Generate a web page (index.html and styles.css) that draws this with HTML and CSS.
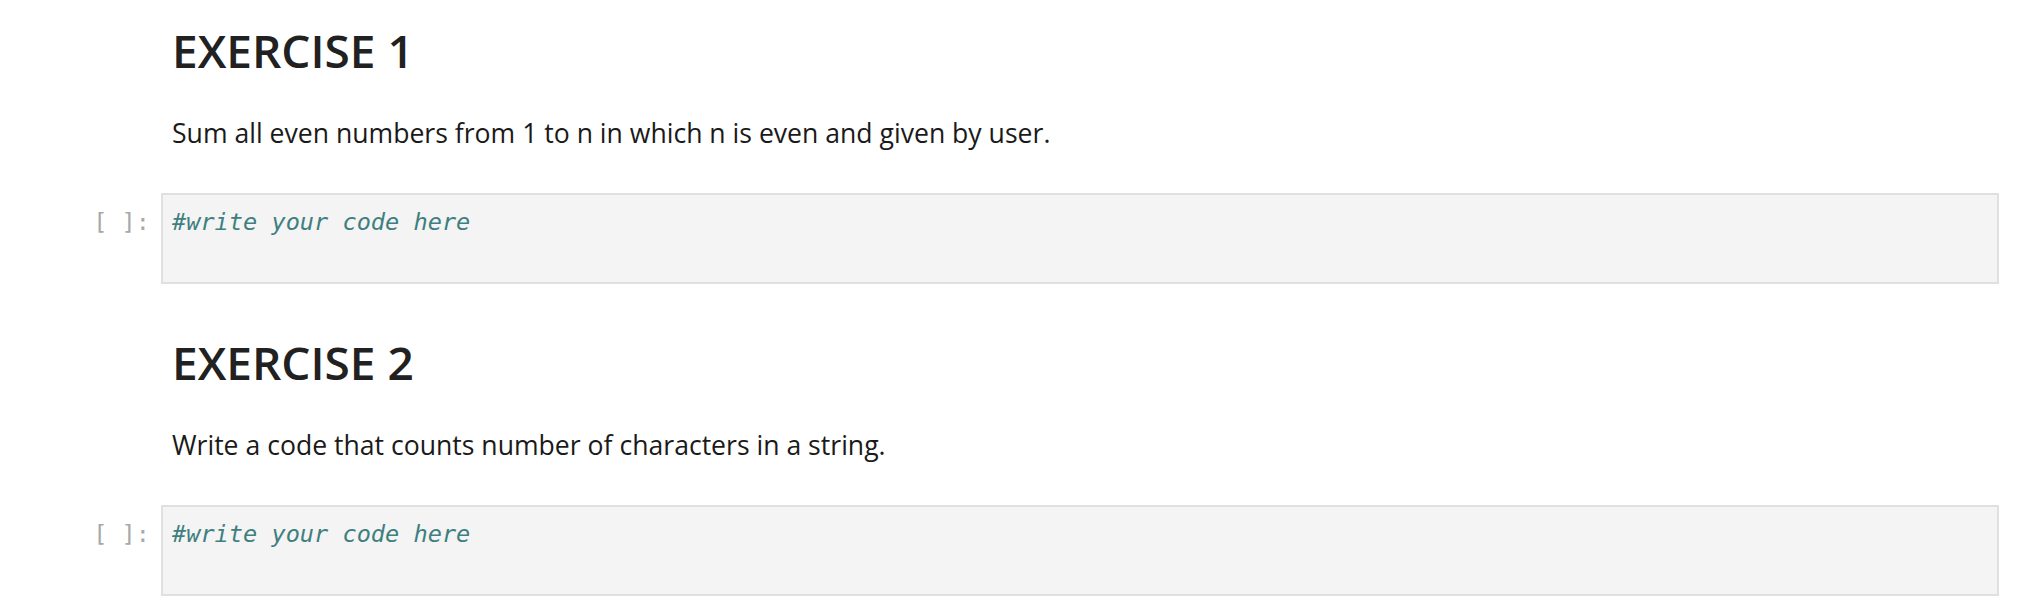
FILE: index.html
```html
<!DOCTYPE html>
<html>
<head>
<meta charset="utf-8">
<link rel="stylesheet" href="styles.css">
</head>
<body>
<main class="notebook">
  <section class="cell md-cell">
    <div class="prompt"></div>
    <div class="md">
      <h1 class="title">EXERCISE 1</h1>
      <p class="text">Sum all even numbers from 1 to n in which n is even and given by user.</p>
    </div>
  </section>
  <section class="cell code-cell">
    <div class="prompt">[ ]:</div>
    <div class="editor"><pre class="code"><span class="comment">#write your code here</span></pre></div>
  </section>
  <section class="cell md-cell">
    <div class="prompt"></div>
    <div class="md">
      <h1 class="title">EXERCISE 2</h1>
      <p class="text">Write a code that counts number of characters in a string.</p>
    </div>
  </section>
  <section class="cell code-cell">
    <div class="prompt">[ ]:</div>
    <div class="editor"><pre class="code"><span class="comment">#write your code here</span></pre></div>
  </section>
</main>
</body>
</html>
```
FILE: styles.css
```css
html, body { margin: 0; padding: 0; background: #fff; }
body { font-family: "Open Sans", "Noto Sans", sans-serif; color: #212121; }
.notebook { display: flex; flex-direction: column; padding: 0 30px 0 0; }
.cell { display: flex; align-items: flex-start; }
.prompt {
  flex: 0 0 150px; box-sizing: border-box;
  font-family: "DejaVu Sans Mono", monospace; font-size: 23.6px; line-height: 33px;
  color: #a8a8a8; text-align: right; padding-top: 13px; margin-right: 11px;
  white-space: pre;
}
.md { flex: 1; padding-left: 11px; }
.title { font-size: 46px; font-weight: 600; margin: 0; padding-top: 22.85px; line-height: 1.2; color: #212121; }
.text { font-size: 26.6px; margin: 37.3px 0 0 0; line-height: 1.4; color: #1a1a1a; }
.code-cell { margin-top: 40.4px; }
.code-cell + .md-cell { margin-top: 28px; }
.editor { flex: 1; background: #f4f4f4; border: 2px solid #e0e0e0; }
.code {
  margin: 0; padding: 11px 10px 10px 9px; min-height: 66px;
  font-family: "DejaVu Sans Mono", monospace; font-size: 23.6px; line-height: 33px;
}
.comment { color: #3f7f7f; font-style: italic; }
```
